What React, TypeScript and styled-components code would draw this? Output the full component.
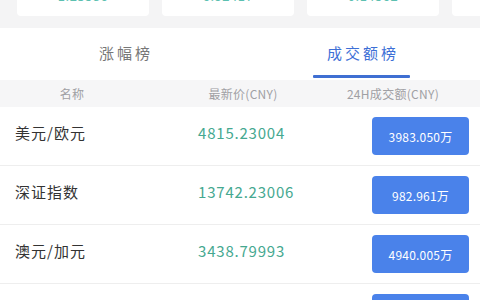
import { FC } from "react";
import styled, { createGlobalStyle } from "styled-components";

const GlobalStyle = createGlobalStyle`
  html, body {
    margin: 0;
    padding: 0;
    background: #fff;
    overflow: hidden;
  }
  body {
    font-family: "Noto Sans CJK SC", "Noto Sans", sans-serif;
  }
`;

const Page = styled.div`
  width: 480px;
  height: 300px;
  overflow: hidden;
  background: #fff;
`;

const CardStrip = styled.div`
  display: flex;
  gap: 13px;
  height: 28px;
  padding-left: 17px;
  background: #f4f4f5;
  overflow: hidden;
`;

const Card = styled.div`
  flex: 0 0 132px;
  height: 40px;
  margin-top: -24px;
  background: #fff;
  border-radius: 4px;
  display: flex;
  justify-content: center;
  align-items: flex-end;
  box-sizing: border-box;
  padding-bottom: 14px;
`;

const CardValue = styled.span`
  font-size: 13px;
  line-height: 13px;
  color: #5cc0b0;
  letter-spacing: 0.5px;
`;

const TabBar = styled.div`
  display: flex;
  padding-left: 6px;
  background: #fff;
`;

const Tab = styled.div`
  flex: 1;
  display: flex;
  flex-direction: column;
  align-items: center;
  padding: 15px 0 2px;
  gap: 12px;
  cursor: pointer;
`;

const TabLabel = styled.span<{ $active?: boolean }>`
  font-size: 15px;
  line-height: 20px;
  letter-spacing: 3px;
  margin-right: -3px;
  color: ${(p) => (p.$active ? "#3d6fd6" : "#777")};
`;

const Indicator = styled.div<{ $active?: boolean }>`
  width: 97px;
  height: 3px;
  border-radius: 1px;
  background: ${(p) => (p.$active ? "#3f6fd2" : "transparent")};
`;

const HeaderRow = styled.div`
  display: grid;
  grid-template-columns: 144px 198px 1fr;
  padding-right: 36px;
  height: 27px;
  background: #f6f6f7;
  font-size: 12px;
  line-height: 27px;
  color: #a0a0a4;
  text-align: center;
  letter-spacing: 0.3px;
`;

const Row = styled.div`
  display: grid;
  grid-template-columns: 183px 1fr auto;
  align-items: center;
  height: 58px;
  padding: 0 11px 0 15px;
  border-bottom: 1px solid #eeeeee;
`;

const Name = styled.span`
  font-size: 15px;
  letter-spacing: 1px;
  color: #333;
  margin-top: -7px;
`;

const Price = styled.span`
  font-size: 15px;
  letter-spacing: 0.8px;
  color: #45a890;
  margin-top: -7px;
`;

const VolumeButton = styled.button`
  width: 97px;
  height: 38px;
  border: none;
  border-radius: 4px;
  background: #4a82ea;
  color: #fff;
  font-family: inherit;
  font-size: 12px;
  letter-spacing: 0.2px;
  cursor: pointer;
`;

const cards = ["1.23586", "6.92417", "0.14562", "7.1"];

const rows = [
  { name: "美元/欧元", price: "4815.23004", volume: "3983.050万" },
  { name: "深证指数", price: "13742.23006", volume: "982.961万" },
  { name: "澳元/加元", price: "3438.79993", volume: "4940.005万" },
  { name: "英镑/美元", price: "1526.40812", volume: "2157.318万" },
];

const App: FC = () => {
  return (
    <Page>
      <GlobalStyle />
      <CardStrip>
        {cards.map((c) => (
          <Card key={c}>
            <CardValue>{c}</CardValue>
          </Card>
        ))}
      </CardStrip>
      <TabBar>
        <Tab>
          <TabLabel>涨幅榜</TabLabel>
          <Indicator />
        </Tab>
        <Tab>
          <TabLabel $active>成交额榜</TabLabel>
          <Indicator $active />
        </Tab>
      </TabBar>
      <HeaderRow>
        <span>名称</span>
        <span>最新价(CNY)</span>
        <span>24H成交额(CNY)</span>
      </HeaderRow>
      {rows.map((r) => (
        <Row key={r.name}>
          <Name>{r.name}</Name>
          <Price>{r.price}</Price>
          <VolumeButton>{r.volume}</VolumeButton>
        </Row>
      ))}
    </Page>
  );
};

export default App;
